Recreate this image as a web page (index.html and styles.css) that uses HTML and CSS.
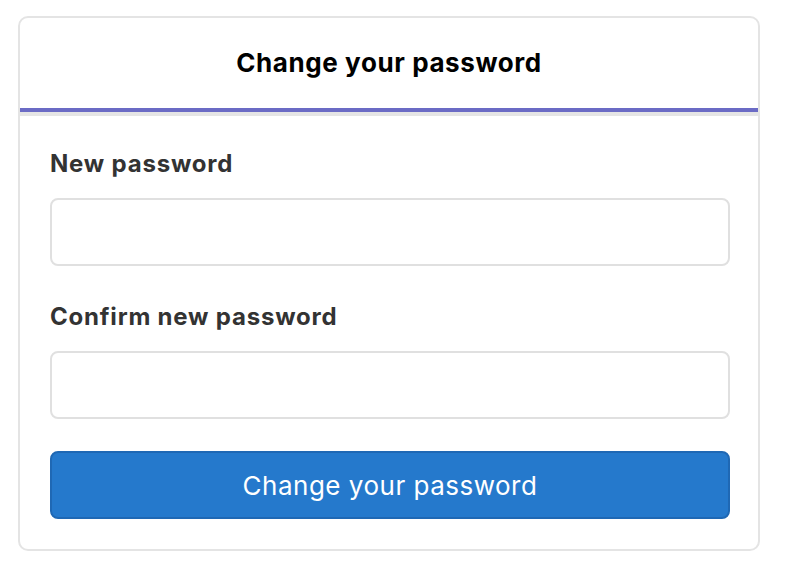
FILE: index.html
```html
<!DOCTYPE html>
<html>
<head>
<meta charset="utf-8">
<link rel="stylesheet" href="styles.css">
</head>
<body>
<div class="card">
  <div class="card-header">
    <h1 class="title">Change your password</h1>
  </div>
  <form class="card-body">
    <label class="label" for="pw1">New password</label>
    <input class="input" id="pw1" type="password">
    <label class="label label-second" for="pw2">Confirm new password</label>
    <input class="input" id="pw2" type="password">
    <button class="button" type="button">Change your password</button>
  </form>
</div>
</body>
</html>
```
FILE: styles.css
```css
html, body {
  margin: 0;
  background: #ffffff;
}
body {
  padding: 16px 26px 0 18px;
  font-family: Inter, "Liberation Sans", Arial, sans-serif;
}
.card {
  width: 742px;
  box-sizing: border-box;
  border: 2px solid #e4e4e4;
  border-radius: 10px;
  overflow: hidden;
}
.card-header {
  height: 90px;
  display: flex;
  align-items: center;
  justify-content: center;
  border-bottom: 4px solid #6b6bc5;
}
.title {
  margin: 0 0 2px;
  font-size: 26px;
  font-weight: 700;
  letter-spacing: 0.6px;
  color: #000;
}
.card-body {
  display: flex;
  flex-direction: column;
  border-top: 4px solid #e5e5e5;
  padding: 0 28px 30px 30px;
  margin: 0;
}
.label {
  font-size: 24px;
  font-weight: 700;
  letter-spacing: 0.8px;
  color: #333333;
  margin-top: 34px;
  line-height: 28px;
  height: 28px;
}
.label-second {
  margin-top: 37px;
}
.input {
  margin-top: 20px;
  height: 68px;
  box-sizing: border-box;
  border: 2px solid #e0e0e0;
  border-radius: 8px;
  background: #fff;
  outline: none;
}
.button {
  margin-top: 32px;
  height: 68px;
  box-sizing: border-box;
  border: 2px solid #1f68b4;
  border-radius: 8px;
  background: #2579cc;
  color: #fff;
  font-family: Inter, "Liberation Sans", Arial, sans-serif;
  font-size: 26px;
  letter-spacing: 0.5px;
  font-weight: normal;
}
```
